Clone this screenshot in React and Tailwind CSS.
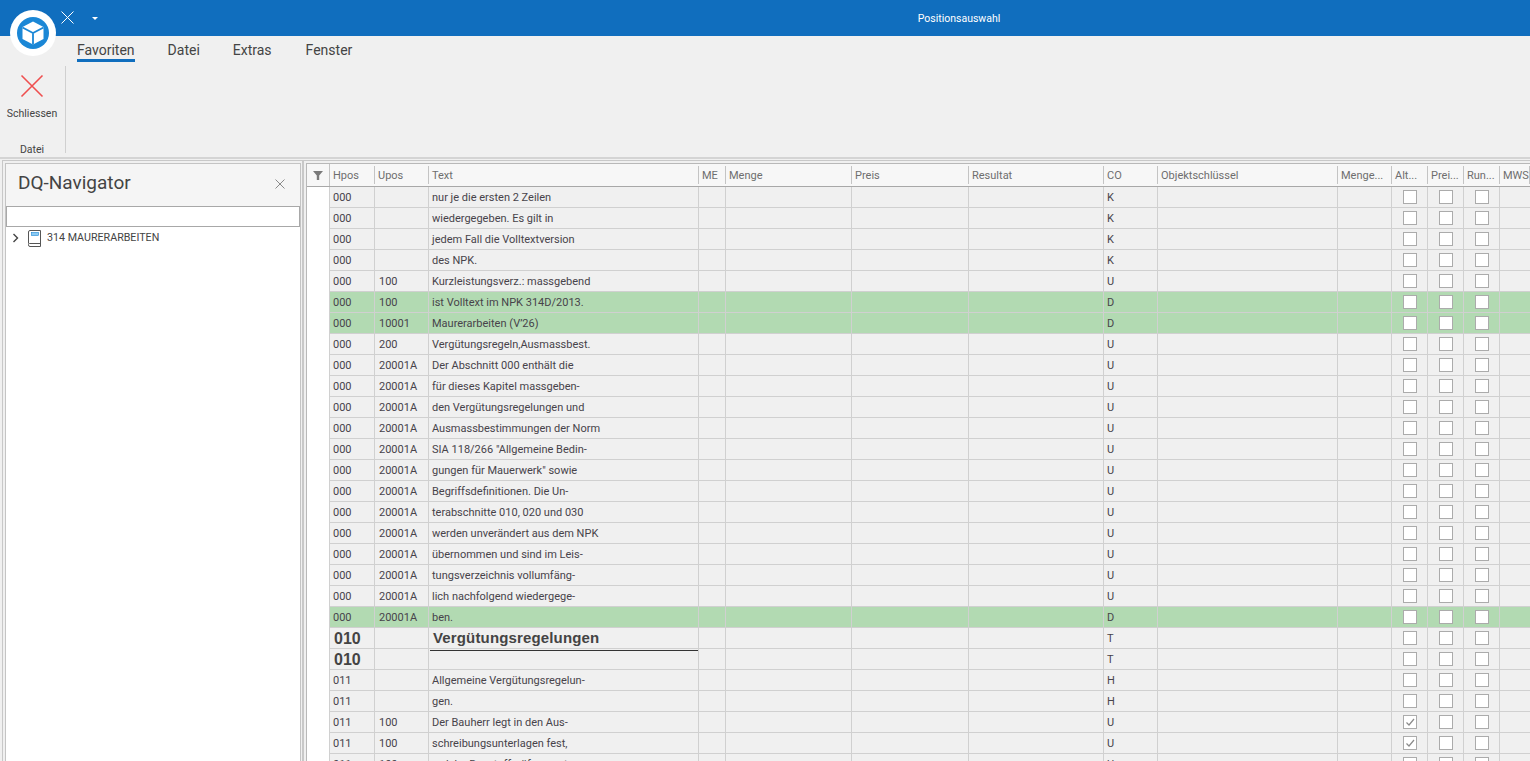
const appFont = { fontFamily: 'Roboto, "Noto Sans", sans-serif' };

const columns = 'grid grid-cols-[45px_54px_270px_27px_126px_117px_135px_54px_180px_54px_36px_36px_36px_30px]';

const headers = ['Hpos', 'Upos', 'Text', 'ME', 'Menge', 'Preis', 'Resultat', 'CO', 'Objektschlüssel', 'Menge...', 'Alt...', 'Prei...', 'Run...', 'MWST'];

const rows = [
  ['000', '', 'nur je die ersten 2 Zeilen', 'K'],
  ['000', '', 'wiedergegeben. Es gilt in', 'K'],
  ['000', '', 'jedem Fall die Volltextversion', 'K'],
  ['000', '', 'des NPK.', 'K'],
  ['000', '100', 'Kurzleistungsverz.: massgebend', 'U'],
  ['000', '100', 'ist Volltext im NPK 314D/2013.', 'D', 'green'],
  ['000', '10001', 'Maurerarbeiten (V’26)', 'D', 'green'],
  ['000', '200', 'Vergütungsregeln,Ausmassbest.', 'U'],
  ['000', '20001A', 'Der Abschnitt 000 enthält die', 'U'],
  ['000', '20001A', 'für dieses Kapitel massgeben-', 'U'],
  ['000', '20001A', 'den Vergütungsregelungen und', 'U'],
  ['000', '20001A', 'Ausmassbestimmungen der Norm', 'U'],
  ['000', '20001A', 'SIA 118/266 "Allgemeine Bedin-', 'U'],
  ['000', '20001A', 'gungen für Mauerwerk" sowie', 'U'],
  ['000', '20001A', 'Begriffsdefinitionen. Die Un-', 'U'],
  ['000', '20001A', 'terabschnitte 010, 020 und 030', 'U'],
  ['000', '20001A', 'werden unverändert aus dem NPK', 'U'],
  ['000', '20001A', 'übernommen und sind im Leis-', 'U'],
  ['000', '20001A', 'tungsverzeichnis vollumfäng-', 'U'],
  ['000', '20001A', 'lich nachfolgend wiedergege-', 'U'],
  ['000', '20001A', 'ben.', 'D', 'green'],
  ['010', '', 'Vergütungsregelungen', 'T', 'title'],
  ['010', '', '', 'T', 'rule'],
  ['011', '', 'Allgemeine Vergütungsregelun-', 'H'],
  ['011', '', 'gen.', 'H'],
  ['011', '100', 'Der Bauherr legt in den Aus-', 'U', 'checked'],
  ['011', '100', 'schreibungsunterlagen fest,', 'U', 'checked'],
  ['011', '100', 'welche Baustoffprüfungen to', 'U'],
];

const Box = ({ checked }) => (
  <div className="w-[14px] h-[14px] bg-white border border-[#ababab] flex items-center justify-center">
    {checked && (
      <svg width="10" height="10" viewBox="0 0 10 10">
        <path d="M1.5 5.5 L4 8 L9 2" fill="none" stroke="#8a8a8a" strokeWidth="1.2" />
      </svg>
    )}
  </div>
);

const Row = ({ row }) => {
  const [hpos, upos, text, co, kind] = row;
  const big = kind === 'title' || kind === 'rule';
  const bg = kind === 'green' ? 'bg-[#b2dab2]' : 'bg-[#f0f0f0]';
  const cell = 'border-r border-[#d0d0d0] overflow-hidden whitespace-nowrap flex items-center px-[3px]';
  return (
    <div className={`${columns} h-[21px] border-b border-[#d0d0d0] ${bg} text-[11px] text-[#47434a]`}>
      {big ? (
        <div className={`${cell} pl-[4px] pt-[1px] text-[16px] font-bold text-[#444] [font-family:'Liberation_Sans']`}>{hpos}</div>
      ) : (
        <div className={`${cell} pt-[2px]`}>{hpos}</div>
      )}
      <div className={`${cell} pl-[4px] pt-[2px]`}>{upos}</div>
      {kind === 'title' && (
        <div className={`${cell} text-[15px] font-bold tracking-[0.15px] text-[#444] [font-family:'Liberation_Sans'] pl-[4px]`}>{text}</div>
      )}
      {kind === 'rule' && (
        <div className="border-r border-[#d0d0d0] pl-[1px] pt-[1px]">
          <div className="h-[1px] bg-[#333]" />
        </div>
      )}
      {!big && <div className={`${cell} pt-[2px]`}>{text}</div>}
      <div className={cell} />
      <div className={cell} />
      <div className={cell} />
      <div className={cell} />
      <div className={`${cell} pt-[2px]`}>{co}</div>
      <div className={cell} />
      <div className={cell} />
      <div className={`${cell} justify-center`}><Box checked={kind === 'checked'} /></div>
      <div className={`${cell} justify-center`}><Box /></div>
      <div className={`${cell} justify-center`}><Box /></div>
      <div />
    </div>
  );
};

export default function App() {
  return (
    <div className="h-[761px] w-[1530px] overflow-hidden bg-[#f0f0f0] relative flex flex-col" style={appFont}>
      {/* title bar */}
      <div className="h-[36px] bg-[#106ebe] flex items-center shrink-0">
        <div className="w-[388px] flex items-center pl-[61px] gap-[18px]">
          <svg width="13" height="13" viewBox="0 0 13 13" className="-mt-[1px]">
            <path d="M0.5 0.5 L12.5 12.5 M12.5 0.5 L0.5 12.5" stroke="#fff" strokeWidth="1" fill="none" />
          </svg>
          <div className="w-0 h-0 border-l-[3.5px] border-r-[3.5px] border-t-[3px] border-l-transparent border-r-transparent border-t-white" />
        </div>
        <div className="flex-1 text-center text-[10.5px] text-white pt-[2px]">Positionsauswahl</div>
      </div>

      {/* logo */}
      <svg width="46" height="46" viewBox="0 0 46 46" className="absolute left-[10px] top-[10px]">
        <circle cx="23" cy="23" r="23" fill="#fff" />
        <circle cx="23" cy="23" r="16" fill="#1b87d6" />
        <path d="M23 11.5 L33.5 17 V29 L23 34.5 L12.5 29 V17 Z" fill="#fff" />
        <path d="M12.5 17.5 L23 23 L33.5 17.5 M23 23 V34.5" stroke="#1b87d6" strokeWidth="1.8" fill="none" />
      </svg>

      {/* ribbon */}
      <div className="h-[121px] shrink-0 flex flex-col">
        <div className="h-[30px] shrink-0 pl-[77px] flex gap-[33px] text-[14px] text-[#444]">
          <div className="h-[26px] flex items-center border-b-[3px] border-[#106ebe] pt-[6px]">Favoriten</div>
          <div className="h-[26px] flex items-center pt-[3px]">Datei</div>
          <div className="h-[26px] flex items-center pt-[3px]">Extras</div>
          <div className="h-[26px] flex items-center pt-[3px] ml-[1px]">Fenster</div>
        </div>
        <div className="flex items-start">
          <div className="w-[65px] flex flex-col items-center text-[10.5px] leading-[14px] text-[#444] pr-[1px] shrink-0">
            <svg width="24" height="24" viewBox="0 0 24 24" className="mt-[8px] shrink-0">
              <path d="M1.5 1.5 L22.5 22.5 M22.5 1.5 L1.5 22.5" stroke="#ef4f4f" strokeWidth="1.6" fill="none" />
            </svg>
            <div className="mt-[9px]">Schliessen</div>
            <div className="mt-[22px]">Datei</div>
          </div>
          <div className="w-[1px] h-[87px] bg-[#d0d0d0]" />
        </div>
      </div>

      {/* splitter */}
      <div className="h-[3px] shrink-0 border-t-2 border-[#d4d4d4]" />

      {/* content */}
      <div className="flex-1 flex min-h-0">
        {/* navigator */}
        <div className="ml-[2px] w-[301px] shrink-0 border-l border-t border-r border-[#c8c8c8] pl-[2px] pr-[1px] pt-[2px] flex">
          <div className="w-[296px] border border-[#c4c4c4] border-b-0 flex flex-col bg-white shrink-0">
            <div className="h-[42px] shrink-0 bg-[#f5f5f5] flex items-center justify-between pl-[12px] pr-[15px] pb-[3px] text-[19px] text-[#444]">
              <span>DQ-Navigator</span>
              <svg width="10" height="10" viewBox="0 0 10 10">
                <path d="M0.5 0.5 L9.5 9.5 M9.5 0.5 L0.5 9.5" stroke="#8a8a8a" strokeWidth="1" fill="none" />
              </svg>
            </div>
            <div className="h-[21px] shrink-0 border border-[#a8a8a8] bg-white" />
            <div className="flex items-center h-[22px] pl-[6px] text-[10.7px] text-[#444]">
              <svg width="8" height="10" viewBox="0 0 8 10">
                <path d="M1.5 1 L5.5 5 L1.5 9" fill="none" stroke="#444" strokeWidth="1.4" />
              </svg>
              <svg width="16" height="17" viewBox="0 0 16 17" className="ml-[6px] mr-[5px]">
                <path d="M2.5 13.5 V2 A1.5 1.5 0 0 1 4 0.5 H14.5 V16.5 H4 A1.5 1.5 0 0 1 2.5 15 V14.5 A1 1 0 0 1 3.5 13.5 H14.5" fill="none" stroke="#555" />
                <rect x="5.5" y="2.5" width="7" height="3" fill="#8ccaf2" stroke="#1b87d6" strokeWidth="0.6" />
              </svg>
              <span>314 MAURERARBEITEN</span>
            </div>
          </div>
        </div>

        {/* grid */}
        <div className="flex-1 min-w-0 border-l border-t border-[#c8c8c8] pl-[2px] pt-[2px] flex">
          <div className="flex-1 min-w-0 border-l border-t border-[#b8b8b8] bg-white overflow-hidden">
            <div className="flex h-[23px] border-b border-[#a8a8a8] bg-[#f7f7f7] text-[11px] text-[#6e6e6e]">
              <div className="w-[23px] shrink-0 border-r border-[#c4c4c4] flex items-center justify-center">
                <svg width="10" height="9" viewBox="0 0 10 9">
                  <path d="M0 0 H10 L6.2 4.5 V9 H3.8 V4.5 Z" fill="#7a7a7a" />
                </svg>
              </div>
              <div className={columns}>
                {headers.map((h) => (
                  <div key={h} className="flex items-center px-[3px] pt-[2px] whitespace-nowrap overflow-hidden border-r border-[#c4c4c4] my-[2px]">{h}</div>
                ))}
              </div>
            </div>
            <div className="flex">
              <div className="w-[23px] shrink-0 bg-white border-r border-[#d0d0d0]" />
              <div>
                {rows.map((r, i) => <Row key={i} row={r} />)}
              </div>
            </div>
          </div>
        </div>
      </div>
    </div>
  );
}
